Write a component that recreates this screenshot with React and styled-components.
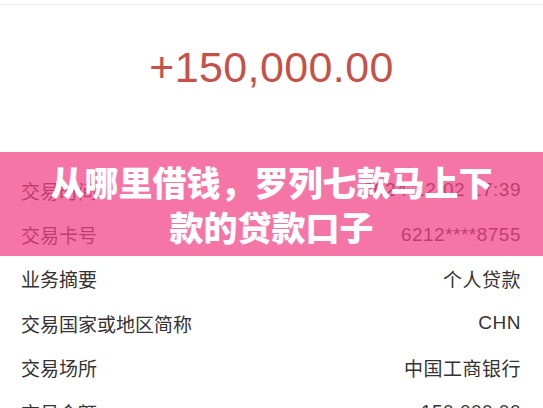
import styled, { createGlobalStyle } from "styled-components";

const Global = createGlobalStyle`
  html, body {
    margin: 0;
    padding: 0;
    background: #fff;
  }
  body {
    font-family: "Liberation Sans", "Noto Sans CJK SC", sans-serif;
    color: #333;
  }
`;

const Page = styled.div`
  position: relative;
  width: 543px;
  height: 408px;
  overflow: hidden;
  background: #fff;
`;

const TopBar = styled.div`
  height: 4px;
  border-bottom: 1px solid #ececec;
`;

const AmountBox = styled.div`
  height: 163px;
  display: flex;
  justify-content: center;
  padding-top: 37px;
  box-sizing: border-box;
`;

const Amount = styled.div`
  font-size: 43px;
  line-height: 50px;
  color: #c5524a;
  letter-spacing: 0.4px;
`;

const List = styled.div`
  display: flex;
  flex-direction: column;
`;

const Row = styled.div`
  height: 44.4px;
  display: flex;
  align-items: center;
  justify-content: space-between;
  padding: 0 22px 0 21px;
  font-size: 19px;
  color: #333;
`;

const Label = styled.span``;
const Value = styled.span`
  letter-spacing: 0.5px;
`;

const Banner = styled.div`
  position: absolute;
  left: 0;
  right: 0;
  top: 152px;
  height: 104px;
  background: rgba(242, 66, 134, 0.73);
  display: flex;
  align-items: center;
  justify-content: center;
  padding: 0 45px;
  box-sizing: border-box;
`;

const Title = styled.h1`
  margin: 0;
  font-family: "Noto Sans CJK SC", sans-serif;
  font-weight: 900;
  font-size: 34px;
  line-height: 45px;
  color: #fff;
  text-align: center;
`;

const rows = [
  ["交易时间", "2024-12-02 17:39"],
  ["交易卡号", "6212****8755"],
  ["业务摘要", "个人贷款"],
  ["交易国家或地区简称", "CHN"],
  ["交易场所", "中国工商银行"],
  ["交易金额", "150,000.00"],
];

export default function App() {
  return (
    <Page>
      <Global />
      <TopBar />
      <AmountBox>
        <Amount>+150,000.00</Amount>
      </AmountBox>
      <List>
        {rows.map(([k, v]) => (
          <Row key={k}>
            <Label>{k}</Label>
            <Value>{v}</Value>
          </Row>
        ))}
      </List>
      <Banner>
        <Title>从哪里借钱，罗列七款马上下款的贷款口子</Title>
      </Banner>
    </Page>
  );
}
